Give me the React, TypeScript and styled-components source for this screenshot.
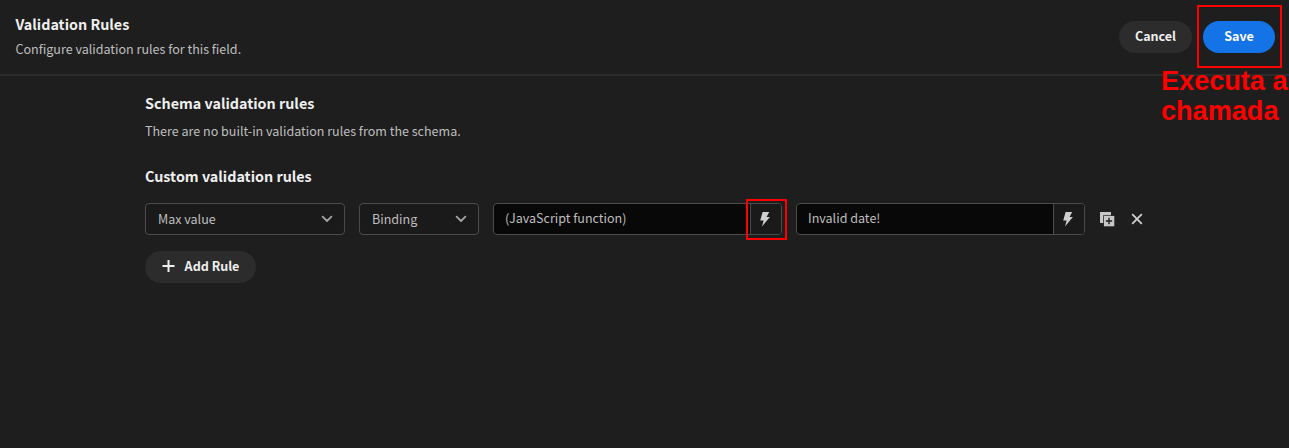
import React from 'react';
import styled, { createGlobalStyle } from 'styled-components';

const GlobalStyle = createGlobalStyle`
  * { box-sizing: border-box; }
  body {
    margin: 0;
    background: #1e1e1e;
    font-family: 'Noto Sans CJK SC', 'Noto Sans', sans-serif;
    overflow: hidden;
  }
`;

const Page = styled.div`
  position: relative;
  width: 1289px;
  height: 448px;
  overflow: hidden;
  color: #bebebe;
`;

const Header = styled.header`
  display: flex;
  justify-content: space-between;
  height: 76px;
  padding: 14px 14px 0 15.5px;
  border-bottom: 2px solid #2c2c2c;
`;

const Heading = styled.h2<{ $gap?: number }>`
  margin: 0 0 ${({ $gap = 0 }) => $gap}px;
  height: 20px;
  font-size: 14.33px;
  line-height: 20px;
  font-weight: 700;
  color: #efefef;
  white-space: nowrap;
`;

const Text = styled.p`
  margin: 0;
  height: 20px;
  font-size: 12.54px;
  line-height: 20px;
  white-space: nowrap;
`;

const Actions = styled.div`
  display: flex;
  gap: 11px;
  padding-top: 7px;
`;

const Button = styled.button<{ $primary?: boolean; $width: number }>`
  display: flex;
  align-items: center;
  justify-content: center;
  gap: 10px;
  width: ${({ $width }) => $width}px;
  height: 32px;
  padding: 0 0 2px;
  border: 0;
  border-radius: 16px;
  background: ${({ $primary }) => ($primary ? '#1473e6' : '#2c2c2c')};
  color: ${({ $primary }) => ($primary ? '#ffffff' : '#efefef')};
  font: 700 12.54px/20px 'Noto Sans CJK SC', 'Noto Sans', sans-serif;
  white-space: nowrap;
`;

const Content = styled.main`
  padding: 17px 145px 0;
`;

const Section = styled.section`
  margin-bottom: 25px;
`;

const RuleRow = styled.div`
  display: flex;
  align-items: center;
  margin-bottom: 16px;
`;

const Picker = styled.div<{ $width: number }>`
  display: flex;
  align-items: center;
  justify-content: space-between;
  width: ${({ $width }) => $width}px;
  height: 32px;
  margin-right: 14px;
  padding: 0 11px 0 12px;
  border: 1px solid #4b4b4b;
  border-radius: 4px;
  background: #1a1a1a;
`;

const Field = styled.div`
  display: flex;
  width: 289px;
  height: 32px;
  margin-right: 14px;
  border: 1px solid #4b4b4b;
  border-radius: 4px;
  background: #080808;
  overflow: hidden;
`;

const Value = styled.div`
  flex: 1;
  padding: 4px 11px;
`;

const BindButton = styled.div`
  display: flex;
  align-items: center;
  justify-content: center;
  width: 31px;
  padding-right: 2px;
  border-left: 1px solid #4b4b4b;
  background: #1a1a1a;
`;

const RowIcons = styled.div`
  display: flex;
  align-items: center;
  gap: 16px;
  margin-left: 1px;
`;

const Highlight = styled.div<{ $x: number; $y: number; $w: number; $h: number }>`
  position: absolute;
  left: ${({ $x }) => $x}px;
  top: ${({ $y }) => $y}px;
  width: ${({ $w }) => $w}px;
  height: ${({ $h }) => $h}px;
  border: 2px solid #ff0000;
`;

const Note = styled.div`
  position: absolute;
  left: 1161px;
  top: 66px;
  font: 700 27.1px/30px 'Liberation Sans', Arial, sans-serif;
  color: #ff0000;
  white-space: nowrap;
`;

const Chevron = () => (
  <svg width="12" height="8" viewBox="0 0 12 8" fill="none" stroke="#a3a3a3" strokeWidth="1.8" strokeLinecap="round" strokeLinejoin="round">
    <path d="M1.6 1.6 6 6l4.4-4.4" />
  </svg>
);

const Bolt = () => (
  <svg width="12" height="16" viewBox="0 0 12 16" fill="#cfcfcf">
    <path d="M3.6.9h6.6L7.6 6h3.3L3 15.6 4.6 9.4H1.2z" />
  </svg>
);

const Duplicate = () => (
  <svg width="15" height="15" viewBox="0 0 15 15">
    <path d="M0 0h11v3.2H3.2V11H0z" fill="#c8c8c8" />
    <path d="M3.9 3.9h10.4v10.4H3.9z" fill="#c8c8c8" />
    <path d="M9 5.8v6.4M5.8 9h6.4" stroke="#1e1e1e" strokeWidth="1.4" />
  </svg>
);

const Close = () => (
  <svg width="12" height="12" viewBox="0 0 12 12" stroke="#d0d0d0" strokeWidth="1.8">
    <path d="M1.2 1.2l9.6 9.6M10.8 1.2l-9.6 9.6" />
  </svg>
);

const Plus = () => (
  <svg width="13" height="13" viewBox="0 0 13 13" stroke="#efefef" strokeWidth="2">
    <path d="M6.5 0v12M.5 6h12" />
  </svg>
);

export default function App() {
  return (
    <>
      <GlobalStyle />
      <Page>
        <Header>
          <div>
            <Heading $gap={5}>Validation Rules</Heading>
            <Text>Configure validation rules for this field.</Text>
          </div>
          <Actions>
            <Button $width={73}>Cancel</Button>
            <Button $primary $width={72}>Save</Button>
          </Actions>
        </Header>
        <Content>
          <Section>
            <Heading $gap={8}>Schema validation rules</Heading>
            <Text>There are no built-in validation rules from the schema.</Text>
          </Section>
          <Heading $gap={17}>Custom validation rules</Heading>
          <RuleRow>
            <Picker $width={200}><Text>Max value</Text><Chevron /></Picker>
            <Picker $width={120}><Text>Binding</Text><Chevron /></Picker>
            <Field>
              <Value><Text>(JavaScript function)</Text></Value>
              <BindButton><Bolt /></BindButton>
            </Field>
            <Field>
              <Value><Text>Invalid date!</Text></Value>
              <BindButton><Bolt /></BindButton>
            </Field>
            <RowIcons><Duplicate /><Close /></RowIcons>
          </RuleRow>
          <Button $width={111}><Plus />Add Rule</Button>
        </Content>
        <Highlight $x={1197} $y={5} $w={85} $h={63} />
        <Highlight $x={746} $y={199} $w={41} $h={41} />
        <Note>Executa a<br />chamada</Note>
      </Page>
    </>
  );
}
